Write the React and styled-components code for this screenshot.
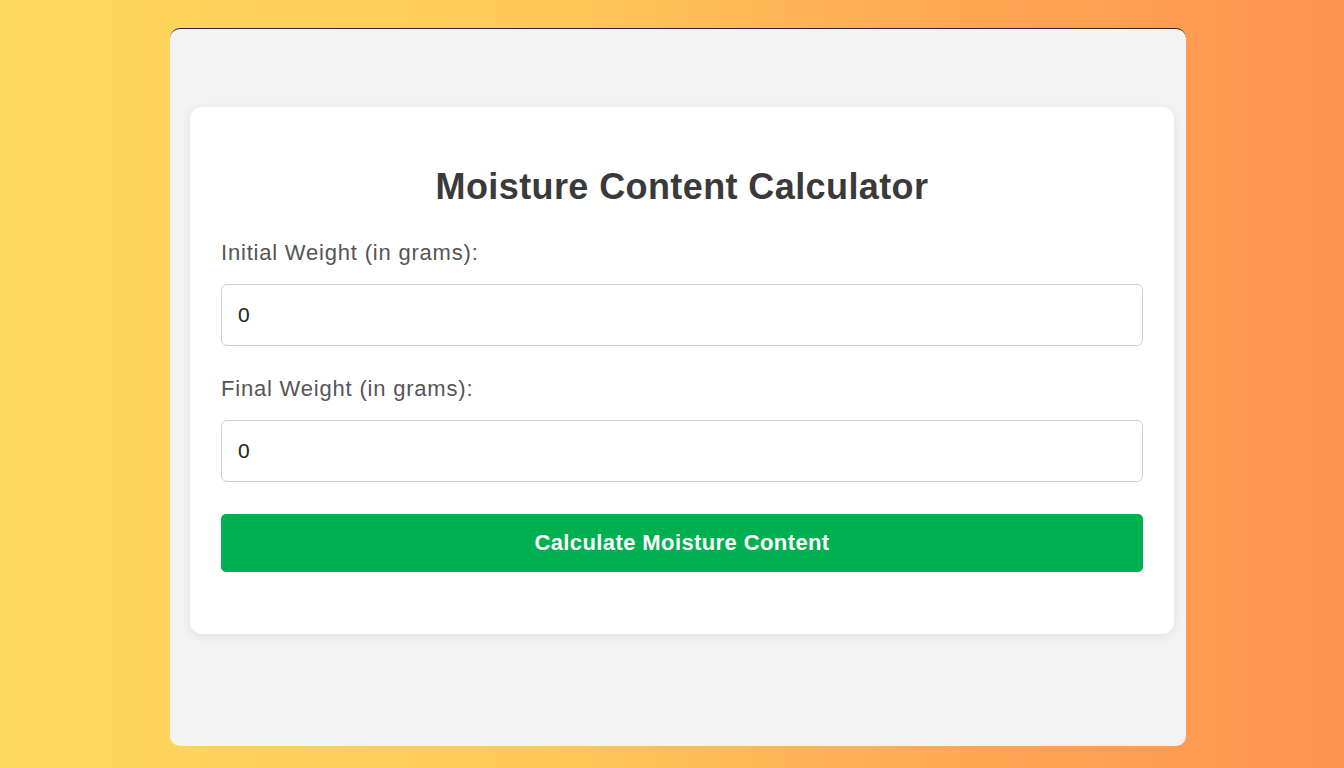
import React, { useState } from "react";
import styled, { createGlobalStyle } from "styled-components";

const GlobalStyle = createGlobalStyle`
  html, body {
    margin: 0;
    padding: 0;
  }
  body {
    font-family: "Liberation Sans", Arial, sans-serif;
    background: linear-gradient(to right, #fed95b, #ffc95a 40%, #ffa953 70%, #fe9350);
    min-height: 768px;
  }
`;

const Page = styled.div`
  display: flex;
  justify-content: center;
  padding: 28px 0 0 12px;
  height: 768px;
  box-sizing: border-box;
`;

const Panel = styled.div`
  width: 1016px;
  height: 718px;
  box-sizing: border-box;
  background: #f3f3f4;
  border-radius: 10px;
  border-top: 1px solid #2a2a2a;
  display: flex;
  align-items: flex-start;
  padding: 78px 12px 0 20px;
`;

const Card = styled.div`
  flex: 1;
  background: #ffffff;
  border-radius: 12px;
  box-shadow: 0 2px 10px rgba(0, 0, 0, 0.08);
  padding: 60px 31px 62px;
  display: flex;
  flex-direction: column;
`;

const Title = styled.h2`
  margin: 0 0 33px;
  font-size: 36px;
  line-height: 40px;
  letter-spacing: 0.4px;
  font-weight: 700;
  color: #3a3a3a;
  text-align: center;
`;

const Label = styled.label`
  display: block;
  font-size: 22px;
  line-height: 25px;
  letter-spacing: 0.8px;
  color: #555;
  margin-bottom: 19px;
`;

const Field = styled.div`
  margin-bottom: ${(p) => (p.$last ? "32px" : "30px")};
`;

const Input = styled.input`
  display: block;
  width: 100%;
  height: 62px;
  box-sizing: border-box;
  border: 1.5px solid #cfcfcf;
  border-radius: 6px;
  padding: 0 16px;
  font-family: inherit;
  font-size: 21px;
  color: #222;
  outline: none;
`;

const Button = styled.button`
  height: 58px;
  width: 100%;
  border: 0;
  border-radius: 5px;
  background: #00b050;
  color: #ffffff;
  font-family: inherit;
  font-size: 22px;
  letter-spacing: 0.4px;
  font-weight: 700;
  cursor: pointer;
`;

export default function App() {
  const [initial, setInitial] = useState("0");
  const [final, setFinal] = useState("0");

  return (
    <>
      <GlobalStyle />
      <Page>
        <Panel>
          <Card>
            <Title>Moisture Content Calculator</Title>
            <Field>
              <Label htmlFor="initial">Initial Weight (in grams):</Label>
              <Input
                id="initial"
                type="number"
                value={initial}
                onChange={(e) => setInitial(e.target.value)}
              />
            </Field>
            <Field $last>
              <Label htmlFor="final">Final Weight (in grams):</Label>
              <Input
                id="final"
                type="number"
                value={final}
                onChange={(e) => setFinal(e.target.value)}
              />
            </Field>
            <Button type="button">Calculate Moisture Content</Button>
          </Card>
        </Panel>
      </Page>
    </>
  );
}
